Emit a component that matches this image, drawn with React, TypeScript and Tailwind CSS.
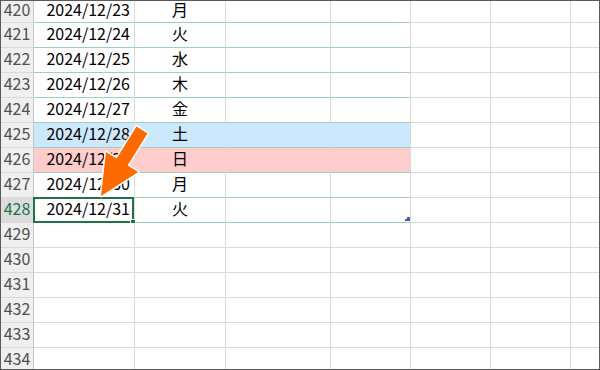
import React from 'react';

const cols = ['w-[101px]', 'w-[91px]', 'w-[105px]', 'w-[80px]', 'w-[80px]', 'w-[80px]', 'flex-1'];

type Row = { n: number; date?: string; day?: string; fill?: 'blue' | 'pink'; active?: boolean };

const rows: Row[] = [
  { n: 420, date: '2024/12/23', day: '月' },
  { n: 421, date: '2024/12/24', day: '火' },
  { n: 422, date: '2024/12/25', day: '水' },
  { n: 423, date: '2024/12/26', day: '木' },
  { n: 424, date: '2024/12/27', day: '金' },
  { n: 425, date: '2024/12/28', day: '土', fill: 'blue' },
  { n: 426, date: '2024/12/29', day: '日', fill: 'pink' },
  { n: 427, date: '2024/12/30', day: '月' },
  { n: 428, date: '2024/12/31', day: '火', active: true },
  { n: 429 },
  { n: 430 },
  { n: 431 },
  { n: 432 },
  { n: 433 },
  { n: 434 },
];

function SheetRow({ row, first }: { row: Row; first: boolean }) {
  const inTable = row.n <= 428;
  const fillBg = row.fill === 'blue' ? 'bg-[#cce8fc]' : row.fill === 'pink' ? 'bg-[#ffcccc]' : 'bg-white';
  const fillBorder = row.fill === 'blue' ? 'border-r-[#cce8fc]' : row.fill === 'pink' ? 'border-r-[#ffcccc]' : 'border-r-[#dadada]';
  // first row is scrolled partly out of view
  const pad = first ? 'pb-[5px]' : 'pb-[5px]';

  return (
    <div className={`flex leading-none ${first ? 'h-[22px]' : 'h-[25px]'}`}>
      {/* row header */}
      <div
        className={`w-[33px] shrink-0 flex items-center justify-center border-r border-b border-r-[#c8c8c8] border-b-[#d8d8d8] ${pad} ${
          row.active ? 'bg-[#dcdcdc] text-[#217346]' : 'bg-[#efefef] text-[#505050]'
        }`}
      >
        {row.n}
      </div>
      {cols.map((w, i) => {
        const tableCell = inTable && i < 4;
        const bg = tableCell ? fillBg : 'bg-white';
        const borderB = tableCell ? 'border-b-[#9fd0b9]' : 'border-b-[#dadada]';
        const borderR = tableCell && i < 3 ? fillBorder : 'border-r-[#dadada]';
        return (
          <div
            key={i}
            className={`${w} shrink-0 relative flex items-center border-r border-b ${bg} ${borderB} ${borderR} ${pad} ${
              i === 6 ? 'border-r-0' : ''
            } ${i === 0 ? 'justify-end pr-[4px]' : 'justify-center'} text-black`}
          >
            {i === 0 && row.date}
            {i === 1 && row.day}
            {i === 0 && row.active && (
              <div className="absolute -left-[1px] -top-[1px] right-[0px] -bottom-[1px] border-2 border-[#217346]">
                <div className="absolute -right-[4px] -bottom-[4px] w-[6px] h-[6px] bg-[#217346] border border-white" />
              </div>
            )}
            {i === 3 && row.n === 428 && (
              <svg className="absolute right-[0px] bottom-[1px]" width="5" height="5" viewBox="0 0 5 5">
                <path d="M5 0 V5 H0 V3 H2 V1 H5 Z" fill="#4a57b5" />
              </svg>
            )}
          </div>
        );
      })}
    </div>
  );
}

export default function App() {
  return (
    <div className="relative w-[600px] h-[370px] overflow-hidden border border-[#5a5a5a] bg-white text-[16px] font-['Noto_Sans_CJK_JP',sans-serif]">
      {rows.map((r, i) => (
        <SheetRow key={r.n} row={r} first={i === 0} />
      ))}

      {/* arrow pointing at the active cell */}
      <svg className="absolute -left-[1px] -top-[1px] pointer-events-none" width="600" height="370" viewBox="0 0 600 370">
        <polygon
          points="136.5,126.6 147.5,133.4 127.6,165.4 138.2,172 101,196 106,152 116.6,158.6"
          fill="#ff6a00"
          stroke="#ffffff"
          strokeWidth="3"
          strokeLinejoin="round"
          paintOrder="stroke"
        />
      </svg>
    </div>
  );
}
